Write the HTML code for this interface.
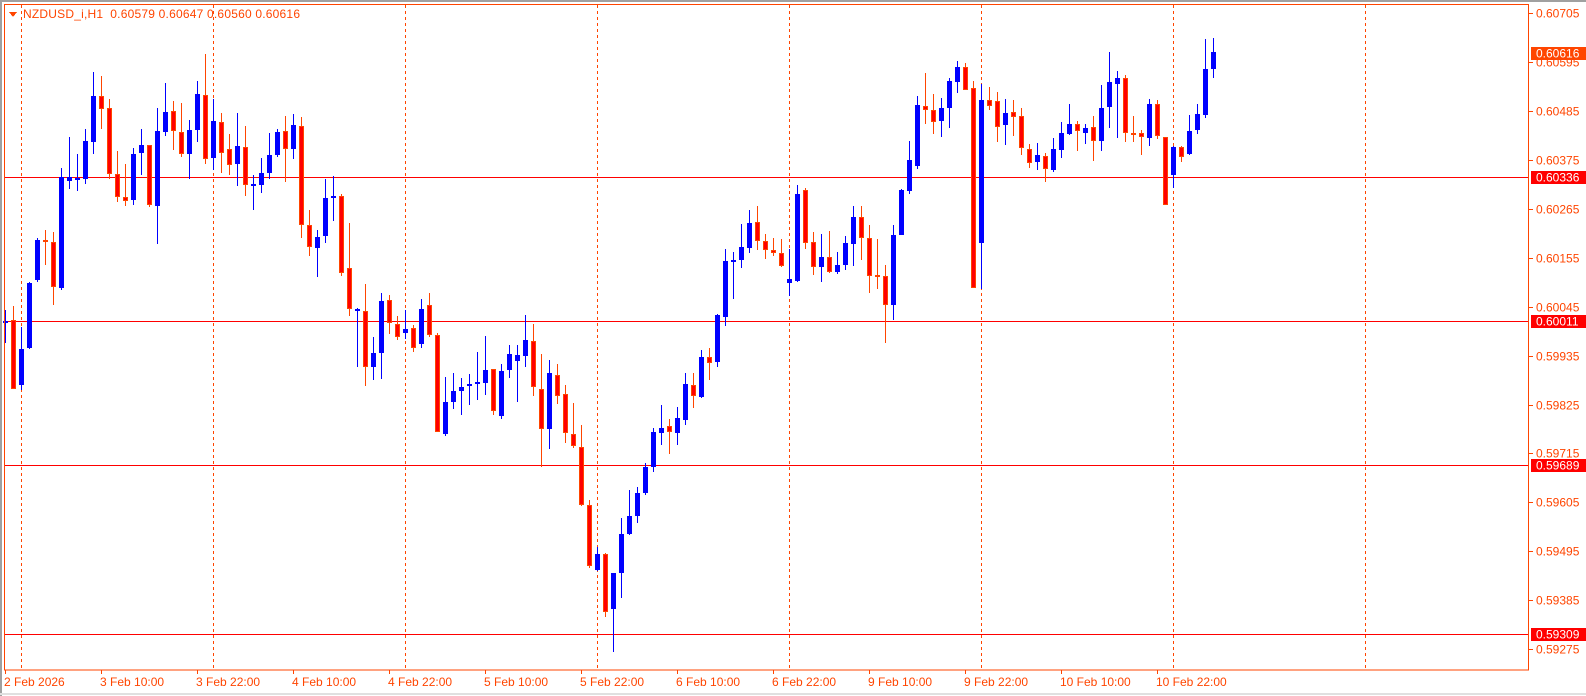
<!DOCTYPE html>
<html><head><meta charset="utf-8"><style>
html,body{margin:0;padding:0;background:#fff;width:1586px;height:696px;overflow:hidden}
svg{display:block}
text{font-family:"Liberation Sans",sans-serif;font-size:12px;fill:#FF4500}
</style></head><body>
<svg id="s" width="1586" height="696" viewBox="0 0 1586 696" xmlns="http://www.w3.org/2000/svg" shape-rendering="crispEdges">
<rect x="0" y="0" width="1586" height="696" fill="#fff"/>
<rect x="0" y="0" width="1586" height="2" fill="#a0a0a0"/>
<rect x="0" y="0" width="2" height="696" fill="#a0a0a0"/>
<rect x="0" y="693" width="1586" height="2" fill="#e0e0e0"/>
<g id="grid"></g>
<g id="hl"></g>
<g id="c"></g>
<rect x="4.5" y="4.5" width="1524" height="665.5" fill="none" stroke="#FF4500" stroke-width="1"/>
<g id="ax"></g>
<polygon points="9,12 17,12 13,17" fill="#FF4500"/>
<text x="23" y="18" textLength="277" lengthAdjust="spacing">NZDUSD_i,H1&#160; 0.60579 0.60647 0.60560 0.60616</text>
</svg>
<script>
var NS="http://www.w3.org/2000/svg";
function el(p,t,a,txt){var e=document.createElementNS(NS,t);for(var k in a)e.setAttribute(k,a[k]);if(txt!==undefined)e.textContent=txt;document.getElementById(p).appendChild(e);return e;}
for(var k=0;k<8;k++){var x=21+192*k;el("grid","line",{x1:x+0.5,y1:5,x2:x+0.5,y2:670,stroke:"#FF4500","stroke-width":1,"stroke-dasharray":"3,3"});}
[177,321,465,634].forEach(function(y){el("hl","line",{x1:5,y1:y+0.5,x2:1529,y2:y+0.5,stroke:"#FF0000","stroke-width":1});});
var d=[
[1,321,323,310,343],[0,320,389,306,389],[1,349,385,327,390],[1,283,348,282,349],[1,240,280,238,282],[0,240,242,230,265],[0,242,287,232,305],[1,177,288,168,290],[1,177,181,137,189],[1,178,180,154,191],
[1,141,179,129,184],[1,96,142,72,154],[0,96,109,76,129],[0,108,174,99,179],[0,174,197,151,202],[0,197,201,164,206],[1,154,200,148,205],[1,145,153,129,175],[0,145,205,145,207],[1,131,206,108,244],
[1,112,132,83,136],[0,111,131,101,150],[0,132,154,103,157],[1,130,154,120,179],[1,94,130,81,142],[0,95,159,54,164],[1,121,158,99,170],[0,122,153,113,173],[0,149,165,134,175],[1,146,164,113,186],
[0,147,185,126,196],[1,184,186,175,210],[1,173,185,158,193],[1,155,173,133,179],[1,132,155,129,157],[0,131,149,116,182],[1,125,149,114,159],[0,126,225,117,238],[0,225,247,210,256],[1,237,248,230,277],
[1,198,236,179,243],[1,196,197,176,221],[0,196,273,194,276],[0,268,309,223,316],[1,309,311,308,367],[0,311,367,284,386],[1,353,367,337,380],[1,301,353,293,379],[0,300,323,295,334],[0,324,337,316,340],
[1,329,333,310,339],[0,328,348,325,352],[1,309,344,299,348],[0,305,335,293,337],[0,335,432,333,432],[1,402,434,377,436],[1,391,402,373,409],[1,387,391,378,415],[1,384,386,374,405],[1,382,383,352,400],
[1,370,383,336,395],[0,369,411,369,415],[1,371,416,364,419],[1,354,370,345,378],[1,355,361,345,402],[1,340,356,315,367],[0,341,387,324,396],[0,389,429,354,467],[1,373,429,360,449],[0,375,396,364,404],
[0,394,433,385,443],[0,434,446,403,448],[0,447,505,425,506],[0,505,566,500,568],[1,554,570,547,571],[0,554,612,553,617],[1,573,609,573,652],[1,534,573,518,598],[1,516,534,490,535],[1,493,516,487,523],
[1,467,493,463,495],[1,432,467,428,472],[1,428,433,405,445],[0,426,432,419,454],[1,418,433,407,445],[1,384,420,373,425],[0,385,396,373,408],[1,357,397,350,398],[0,357,363,348,380],[1,315,362,314,367],
[1,261,317,249,326],[1,260,261,252,299],[1,247,260,224,268],[1,223,248,210,253],[0,222,241,206,250],[0,241,250,234,259],[0,250,253,238,256],[0,253,266,239,267],[1,279,283,249,296],[1,194,281,185,282],
[0,190,243,188,249],[0,242,267,232,275],[1,257,267,234,282],[0,257,272,231,273],[1,265,272,252,274],[1,243,265,236,270],[1,217,244,206,266],[0,217,238,206,260],[0,238,276,225,293],[0,275,277,239,289],
[0,276,305,265,343],[1,235,305,225,320],[1,190,235,189,235],[1,160,191,141,194],[1,105,166,96,169],[0,106,110,73,124],[0,110,122,94,134],[1,108,121,98,137],[1,81,108,78,128],[1,67,82,61,93],
[0,67,90,63,90],[0,88,288,81,288],[1,100,243,84,289],[0,100,106,87,110],[0,101,127,92,142],[1,113,125,99,145],[0,112,117,100,136],[0,116,148,108,155],[0,149,163,144,168],[1,155,162,143,170],
[0,156,169,153,182],[1,149,170,138,172],[1,133,150,122,158],[1,124,134,104,135],[0,124,131,121,151],[1,128,133,124,144],[0,127,141,116,161],[1,108,141,85,151],[1,82,107,52,128],[1,78,84,71,138],
[0,78,133,75,142],[0,133,135,116,142],[0,133,137,130,155],[1,104,138,99,146],[0,104,136,100,139],[0,137,205,137,205],[1,147,175,146,188],[0,147,157,146,162],[1,131,154,115,155],[1,114,130,104,134],
[1,69,115,39,118],[1,52,69,38,78]];
d.forEach(function(c,i){
 var x=5+8*i, bull=c[0]==1;
 var wc=bull?"#0000FF":"#FF4500";
 el("c","rect",{x:x,y:c[3],width:1,height:Math.max(1,c[4]-c[3]),fill:wc});
 var h=Math.max(2,c[2]-c[1]);
 if(bull){el("c","rect",{x:x-2,y:c[1],width:5,height:h,fill:"#0000FF"});}
 else{el("c","rect",{x:x-2,y:c[1],width:5,height:h,fill:"#FF4500"});
  if(h>2)el("c","rect",{x:x-1,y:c[1]+1,width:3,height:h-2,fill:"#FF0000"});}
});
var pl=["0.60705","0.60595","0.60485","0.60375","0.60265","0.60155","0.60045","0.59935","0.59825","0.59715","0.59605","0.59495","0.59385","0.59275"];
pl.forEach(function(t,k){var y=Math.round(13.3+48.9*k);
 el("ax","rect",{x:1529,y:y,width:4,height:1,fill:"#FF4500"});
 el("ax","text",{x:1536,y:y+4.5},t);});
[[53,"0.60616","#FF4500"],[177,"0.60336","#FF0000"],[321,"0.60011","#FF0000"],[465,"0.59689","#FF0000"],[634,"0.59309","#FF0000"]].forEach(function(b){
 el("ax","rect",{x:1531,y:b[0]-6,width:55,height:13,fill:b[2]});
 el("ax","text",{x:1536,y:b[0]+4.5,style:"fill:#fff"},b[1]);});
var tl=["2 Feb 2026","3 Feb 10:00","3 Feb 22:00","4 Feb 10:00","4 Feb 22:00","5 Feb 10:00","5 Feb 22:00","6 Feb 10:00","6 Feb 22:00","9 Feb 10:00","9 Feb 22:00","10 Feb 10:00","10 Feb 22:00"];
tl.forEach(function(t,k){var x=5+96*k;
 el("ax","rect",{x:x,y:670,width:1,height:4,fill:"#FF4500"});
 el("ax","text",{x:x-1,y:686},t);});
</script>
</body></html>
